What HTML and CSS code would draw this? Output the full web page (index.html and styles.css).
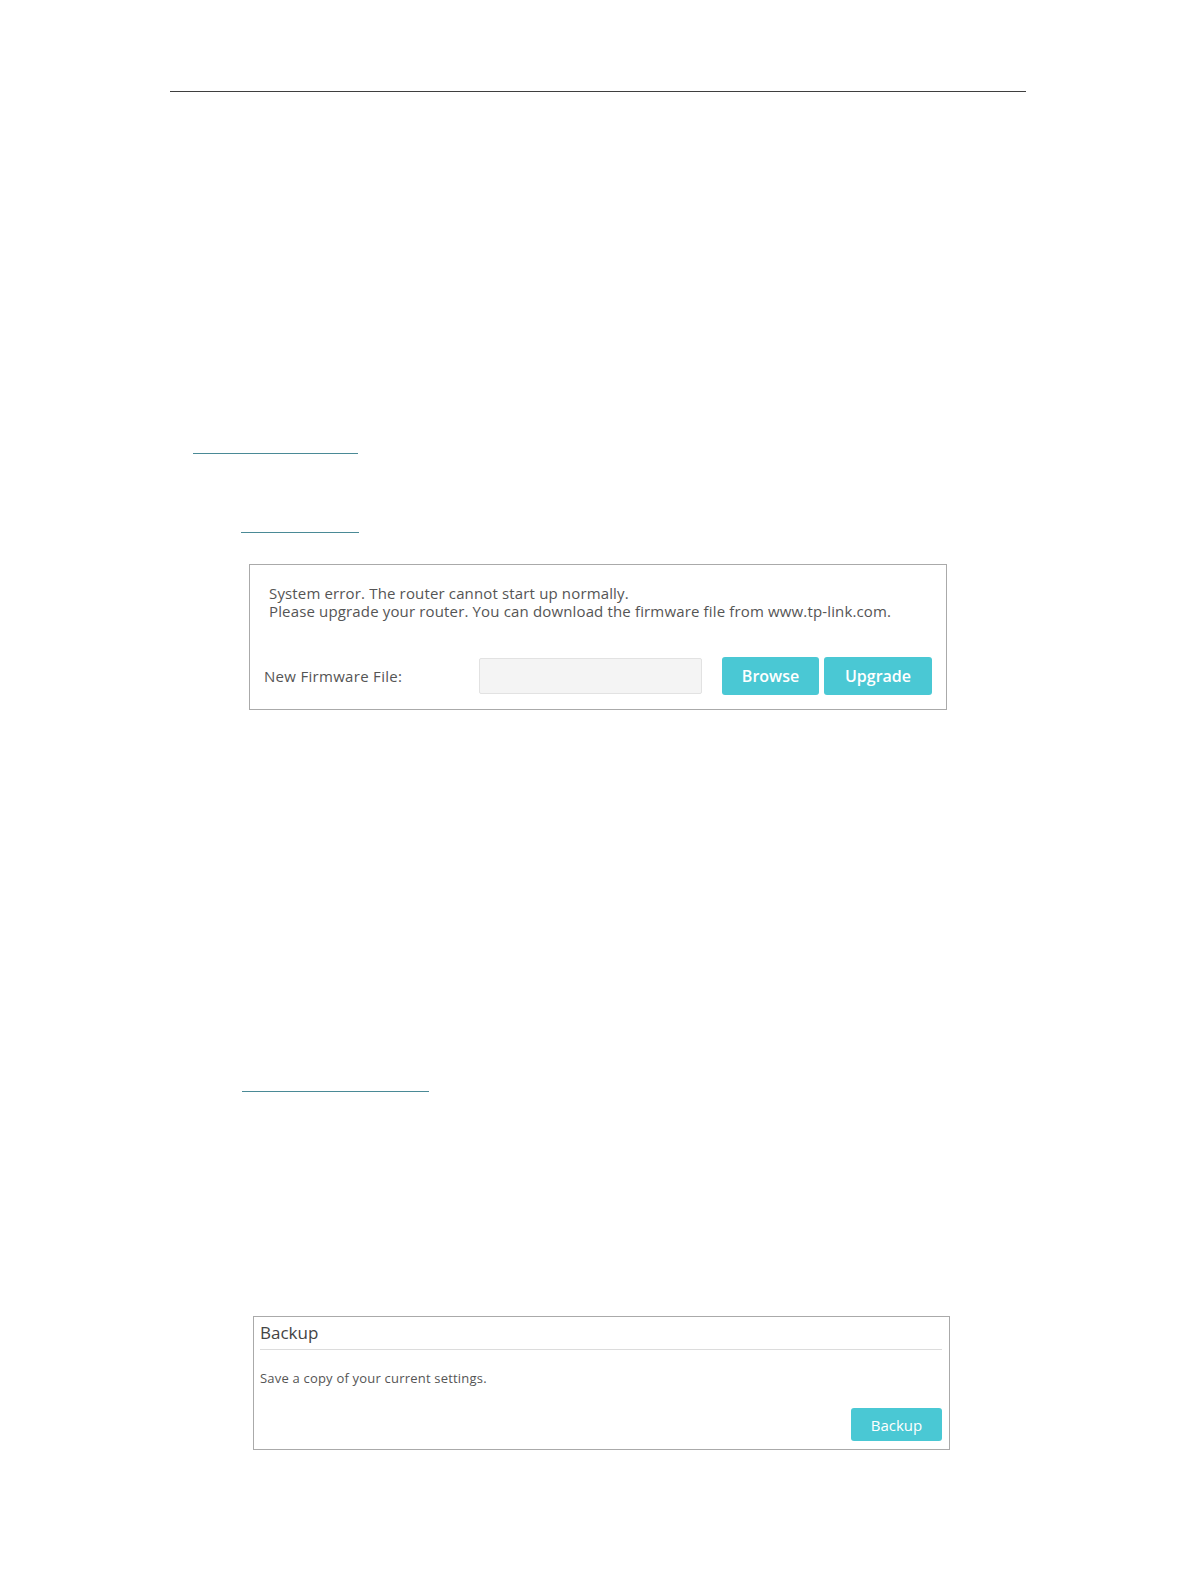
FILE: index.html
```html
<!DOCTYPE html>
<html lang="en">
<head>
  <meta charset="UTF-8" />
  <meta name="viewport" content="width=device-width, initial-scale=1.0"/>
  <title>Firmware Upgrade</title>
  <link rel="stylesheet" href="styles.css">
</head>
<body>
  <div class="page">
    <div class="header-rule"></div>

    <a class="link link-one" href="#"></a>
    <a class="link link-two" href="#"></a>

    <div class="panel panel-error">
      <p class="error-text">
        System error. The router cannot start up normally.<br>
        Please upgrade your router. You can download the firmware file from www.tp-link.com.
      </p>
      <div class="form-row">
        <label class="form-label">New Firmware File:</label>
        <input class="file-field" type="text" />
        <button class="btn btn-browse">Browse</button>
        <button class="btn btn-upgrade">Upgrade</button>
      </div>
    </div>

    <a class="link link-three" href="#"></a>

    <div class="panel panel-backup">
      <h3 class="panel-title">Backup</h3>
      <p class="panel-desc">Save a copy of your current settings.</p>
      <div class="panel-actions">
        <button class="btn btn-small">Backup</button>
      </div>
    </div>
  </div>
</body>
</html>
```

FILE: styles.css
```css
body {
  margin: 0;
  background: #fff;
  font-family: "Open Sans", "Noto Sans", sans-serif;
  color: #555;
}
.page {
  width: 1196px;
  height: 1582px;
  padding-top: 91px;
  box-sizing: border-box;
}
.header-rule {
  margin-left: 170px;
  width: 856px;
  border-top: 1px solid #3f3f3f;
}
.link {
  display: block;
  height: 0;
  border-bottom: 1px solid #4a8a96;
}
.link-one {
  margin: 361px 0 0 193px;
  width: 165px;
}
.link-two {
  margin: 78px 0 0 241px;
  width: 118px;
}
.link-three {
  margin: 381px 0 0 242px;
  width: 187px;
}
.panel {
  border: 1px solid #aaa;
  box-sizing: border-box;
  width: 697px;
}
.panel-error {
  margin: 31px 0 0 249px;
  width: 698px;
  height: 146px;
  padding: 19px 14px 0 14px;
}
.error-text {
  margin: 0 0 0 5px;
  font-size: 15px;
  letter-spacing: 0.15px;
  line-height: 18px;
  color: #555;
}
.form-row {
  display: flex;
  align-items: center;
  margin-top: 37px;
}
.form-label {
  width: 215px;
  font-size: 15px;
  letter-spacing: 0.3px;
  color: #555;
}
.file-field {
  width: 223px;
  height: 36px;
  box-sizing: border-box;
  border: 1px solid #e2e2e2;
  background: #f4f4f4;
  border-radius: 2px;
  margin-right: 20px;
}
.btn {
  border: none;
  border-radius: 3px;
  background: #4ac8d4;
  color: #fff;
  font-family: "Open Sans", "Noto Sans", sans-serif;
  cursor: pointer;
}
.btn-browse,
.btn-upgrade {
  height: 38px;
  font-size: 16px;
  font-weight: 600;
}
.btn-browse {
  width: 97px;
  margin-right: 5px;
}
.btn-upgrade {
  width: 108px;
}
.panel-backup {
  margin: 224px 0 0 253px;
  height: 134px;
  padding: 0 7px 7px 6px;
}
.panel-title {
  margin: 0;
  font-size: 17px;
  font-weight: normal;
  line-height: 32px;
  color: #444;
  border-bottom: 1px solid #dcdcdc;
}
.panel-desc {
  margin: 19px 0 0;
  font-size: 13px;
  letter-spacing: 0.2px;
  line-height: 18px;
  color: #555;
}
.panel-actions {
  display: flex;
  justify-content: flex-end;
  margin-top: 21px;
}
.btn-small {
  width: 91px;
  height: 33px;
  font-size: 15px;
}
```
